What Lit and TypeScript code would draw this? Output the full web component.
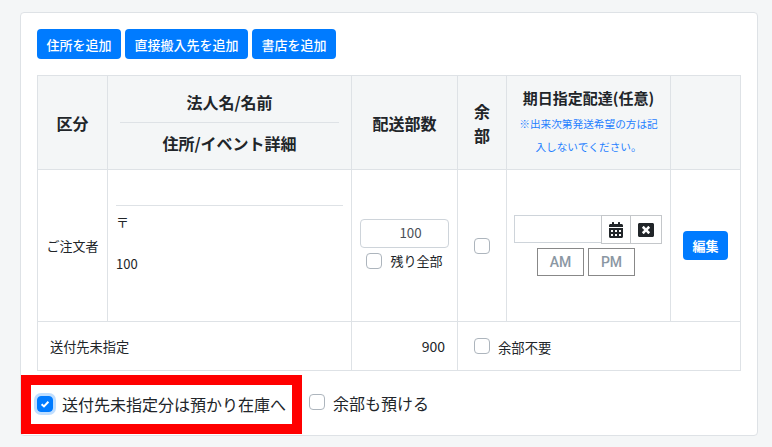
import { LitElement, html, css } from "lit";
import { customElement } from "lit/decorators.js";

const calendar = html`<svg class="cal" viewBox="0 0 448 512"><path fill="#212529" d="M0 464c0 26.5 21.5 48 48 48h352c26.5 0 48-21.5 48-48V192H0v272zm320-196c0-6.6 5.4-12 12-12h40c6.6 0 12 5.4 12 12v40c0 6.6-5.4 12-12 12h-40c-6.6 0-12-5.4-12-12v-40zm0 128c0-6.6 5.4-12 12-12h40c6.6 0 12 5.4 12 12v40c0 6.6-5.4 12-12 12h-40c-6.6 0-12-5.4-12-12v-40zM192 268c0-6.6 5.4-12 12-12h40c6.6 0 12 5.4 12 12v40c0 6.6-5.4 12-12 12h-40c-6.6 0-12-5.4-12-12v-40zm0 128c0-6.6 5.4-12 12-12h40c6.6 0 12 5.4 12 12v40c0 6.6-5.4 12-12 12h-40c-6.6 0-12-5.4-12-12v-40zM64 268c0-6.6 5.4-12 12-12h40c6.6 0 12 5.4 12 12v40c0 6.6-5.4 12-12 12H76c-6.6 0-12-5.4-12-12v-40zm0 128c0-6.6 5.4-12 12-12h40c6.6 0 12 5.4 12 12v40c0 6.6-5.4 12-12 12H76c-6.6 0-12-5.4-12-12v-40zM400 64h-48V16c0-8.8-7.2-16-16-16h-32c-8.8 0-16 7.2-16 16v48H160V16c0-8.8-7.2-16-16-16h-32c-8.8 0-16 7.2-16 16v48H48C21.5 64 0 85.5 0 112v48h448v-48c0-26.5-21.5-48-48-48z"/></svg>`;
const timesBox = html`<svg class="times" viewBox="0 0 512 512"><path fill="#212529" d="M464 32H48C21.5 32 0 53.5 0 80v352c0 26.5 21.5 48 48 48h416c26.5 0 48-21.5 48-48V80c0-26.5-21.5-48-48-48zm-83.6 290.5c4.8 4.8 4.8 12.6 0 17.4l-40.5 40.5c-4.8 4.8-12.6 4.8-17.4 0L256 313.3l-66.5 67.1c-4.8 4.8-12.6 4.8-17.4 0l-40.5-40.5c-4.8-4.8-4.8-12.6 0-17.4l67.1-66.5-67.1-66.5c-4.8-4.8-4.8-12.6 0-17.4l40.5-40.5c4.8-4.8 12.6-4.8 17.4 0l66.5 67.1 66.5-67.1c4.8-4.8 12.6-4.8 17.4 0l40.5 40.5c4.8 4.8 4.8 12.6 0 17.4L313.3 256l67.1 66.5z"/></svg>`;
const check = html`<svg viewBox="0 0 12 12" class="tick"><path d="M2.6 6.2 5 8.4 9.4 3.8" fill="none" stroke="#fff" stroke-width="2"/></svg>`;

@customElement("app-root")
export class AppRoot extends LitElement {
  static styles = css`
    :host { display: block; height: 447px; overflow: hidden; background: #f4f6f7; color: #212529;
      font-family: "Noto Sans CJK JP", "Noto Sans", sans-serif; font-size: 13px; }
    .page { padding: 12px 14px 0 20px; }
    .card { background: #fff; border: 1px solid #dee2e6; border-radius: 4px; padding: 16px 16px 0; height: 424px; box-sizing: border-box; }
    .actions { display: flex; gap: 4px; margin-bottom: 16px; }
    .btn { background: #007bff; color: #fff; border: 0; border-radius: 4px; height: 30px; padding: 0 9.5px; font: 500 13px "Noto Sans CJK JP", sans-serif; display: flex; align-items: center; }
    table { border-collapse: collapse; table-layout: fixed; width: 703px; }
    th, td { border: 1px solid #dee2e6; padding: 0; vertical-align: middle; text-align: center; font-weight: 400; }
    th { background: #f4f6f7; font-size: 16px; font-weight: 700; line-height: 24px; }
    .hrow { height: 94px; } .brow { height: 152px; } .frow { height: 49px; }
    .name-hd { padding: 0 12px; display: flex; flex-direction: column; }
    .name-hd span { height: 40px; display: flex; align-items: center; justify-content: center; }
    .name-hd span + span { border-top: 1px solid #dee2e6; }
    .note { color: #1f80ff; font-size: 10.67px; font-weight: 400; line-height: 23px; padding: 0 8px; }
    .date-hd { line-height: 24px; font-size: 15px; margin-top: -2px; margin-bottom: 2px; }
    .addr { text-align: left; vertical-align: top; padding: 35px 8px 0; line-height: 20px; }
    .addr .rule { border-top: 1px solid #dee2e6; padding-top: 6px; }
    .addr .zip { height: 42px; }
    .qty { display: flex; flex-direction: column; align-items: center; gap: 3px; padding: 0 8px 2px; }
    .qty .num { width: 89px; height: 29px; box-sizing: border-box; border: 1px solid #ced4da; border-radius: 4px; padding: 0 0 2px 12px; display: flex; align-items: center; justify-content: center; color: #495057; font-size: 13.33px; }
    .qty .rest { display: flex; align-items: center; gap: 8px; }
    .cb { width: 16px; height: 16px; box-sizing: border-box; border: 1px solid #adb5bd; border-radius: 4px; background: #fff; display: block; flex: none; }
    .cb.on { background: #007bff; border-color: #007bff; box-shadow: 0 0 0 3px rgba(0,123,255,.25); display: flex; align-items: center; justify-content: center; }
    .tick { width: 12px; height: 12px; }
    .center-cb { display: flex; justify-content: center; }
    .date { display: flex; flex-direction: column; align-items: center; gap: 4px; padding-right: 1px; }
    .date-row { display: flex; align-items: flex-start; }
    .date-input { width: 87px; height: 28px; box-sizing: border-box; border: 1px solid #ced4da; border-right: 0; }
    .ig { width: 30px; height: 29px; box-sizing: border-box; border: 1px solid #c4c7ca; display: flex; align-items: center; justify-content: center; }
    .ig + .ig { border-left: 0; width: 31px; }
    .cal { width: 14px; height: 16px; }
    .times { width: 16px; height: 16px; }
    .ampm { display: flex; gap: 4px; padding-right: 4px; }
    .ampm span { width: 47px; height: 28px; box-sizing: border-box; border: 1px solid #888; display: flex; align-items: center; justify-content: center; color: #8b97a3; font: 500 14px Roboto, sans-serif; }
    .edit { margin: 0 auto; width: 45px; height: 29px; padding: 0; justify-content: center; font-weight: 700; }
    .left { text-align: left; padding-left: 12px; font-size: 13.2px; }
    .right { text-align: right; padding-right: 12px; font-size: 14px; }
    .spare { display: flex; align-items: center; gap: 8px; padding-left: 16px; font-size: 13.33px; }
    .spare span { padding-top: 2px; }
    .foot { display: flex; align-items: center; margin: 4px 0 0 -16px; font-size: 16px; }
    .red { border: 10px solid #f00; width: 281px; height: 59px; box-sizing: border-box; display: flex; align-items: center; gap: 9px; padding: 0 0 2px 6px; background: #fff; }
    .other { display: flex; align-items: center; gap: 8px; margin: -4px 0 0 7px; }
    .other .cb { margin-top: -1px; }
  `;

  render() {
    return html`<div class="page"><div class="card">
      <div class="actions">
        <div class="btn">住所を追加</div>
        <div class="btn">直接搬入先を追加</div>
        <div class="btn">書店を追加</div>
      </div>
      <table>
        <colgroup><col style="width:70px"><col style="width:244px"><col style="width:106px"><col style="width:49px"><col style="width:164px"><col style="width:70px"></colgroup>
        <tr class="hrow">
          <th>区分</th>
          <th><div class="name-hd"><span>法人名/名前</span><span>住所/イベント詳細</span></div></th>
          <th>配送部数</th>
          <th>余<br>部</th>
          <th><div class="date-hd">期日指定配達(任意)</div><div class="note">※出来次第発送希望の方は記入しないでください。</div></th>
          <th></th>
        </tr>
        <tr class="brow">
          <td>ご注文者</td>
          <td class="addr"><div class="rule"><div class="zip">〒</div><div>100</div></div></td>
          <td><div class="qty"><div class="num">100</div><div class="rest"><i class="cb"></i>残り全部</div></div></td>
          <td><div class="center-cb"><i class="cb"></i></div></td>
          <td><div class="date"><div class="date-row"><div class="date-input"></div><div class="ig">${calendar}</div><div class="ig">${timesBox}</div></div><div class="ampm"><span>AM</span><span>PM</span></div></div></td>
          <td><div class="btn edit">編集</div></td>
        </tr>
        <tr class="frow">
          <td colspan="2" class="left">送付先未指定</td>
          <td class="right">900</td>
          <td colspan="3"><div class="spare"><i class="cb"></i><span>余部不要</span></div></td>
        </tr>
      </table>
      <div class="foot">
        <div class="red"><i class="cb on">${check}</i>送付先未指定分は預かり在庫へ</div>
        <div class="other"><i class="cb"></i>余部も預ける</div>
      </div>
    </div></div>`;
  }
}
